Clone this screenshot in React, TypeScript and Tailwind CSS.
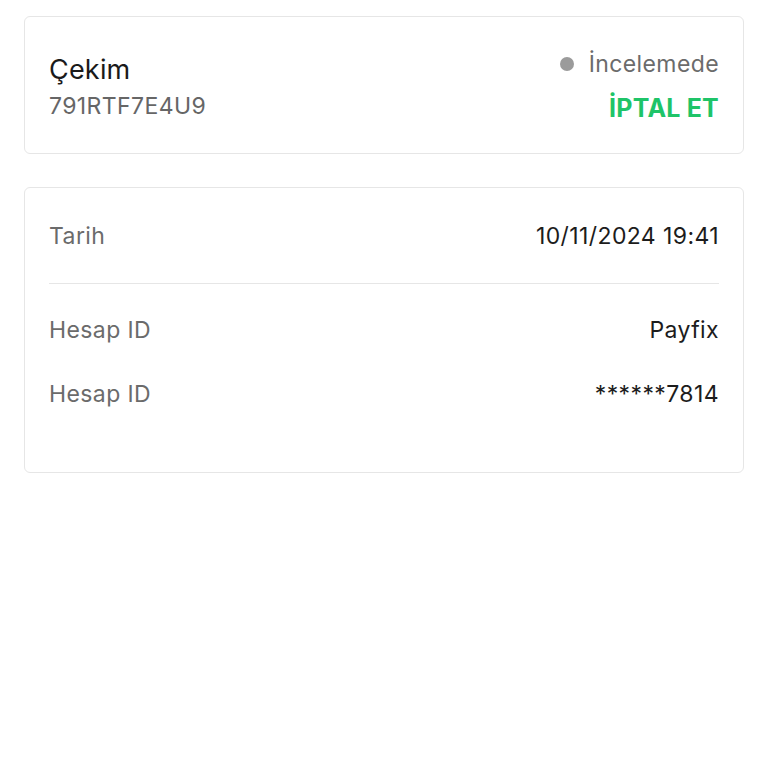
const font = { fontFamily: 'Inter, "Noto Sans", sans-serif' }

function Row({ label, value }: { label: string; value: string }) {
  return (
    <div className="flex items-center justify-between text-[23px] leading-[33px] tracking-[0.4px]">
      <span className="text-[#6b6b6b]">{label}</span>
      <span className="text-[#1c1c1c]">{value}</span>
    </div>
  )
}

export default function App() {
  return (
    <div className="min-h-[768px] bg-white px-6 pt-4" style={font}>
      <div className="flex items-start justify-between rounded-md border border-[#e6e6e6] bg-white px-6 pt-[38px] pb-[30px]">
        <div className="flex flex-col">
          <span className="text-[27px] leading-[30px] tracking-[0.2px] text-[#1a1a1a]">Çekim</span>
          <span className="mt-[6px] text-[23px] leading-[30px] tracking-[0.4px] text-[#666666]">791RTF7E4U9</span>
        </div>
        <div className="-mt-[6px] flex flex-col items-end">
          <div className="flex items-center gap-[15px]">
            <span className="h-[14px] w-[14px] rounded-full bg-[#9b9b9b]" />
            <span className="text-[23px] leading-[30px] tracking-[0.4px] text-[#6b6b6b]">İncelemede</span>
          </div>
          <span className="mt-[14px] text-[25px] font-bold leading-[30px] tracking-[0.2px] text-[#1ec468]">İPTAL ET</span>
        </div>
      </div>

      <div className="mt-[33px] rounded-md border border-[#e6e6e6] bg-white px-6 pt-[32px] pb-[61px]">
        <Row label="Tarih" value="10/11/2024 19:41" />
        <div className="mt-[30px] mb-[30px] h-px bg-[#e6e6e6]" />
        <div className="flex flex-col gap-[31px]">
          <Row label="Hesap ID" value="Payfix" />
          <Row label="Hesap ID" value="******7814" />
        </div>
      </div>
    </div>
  )
}
